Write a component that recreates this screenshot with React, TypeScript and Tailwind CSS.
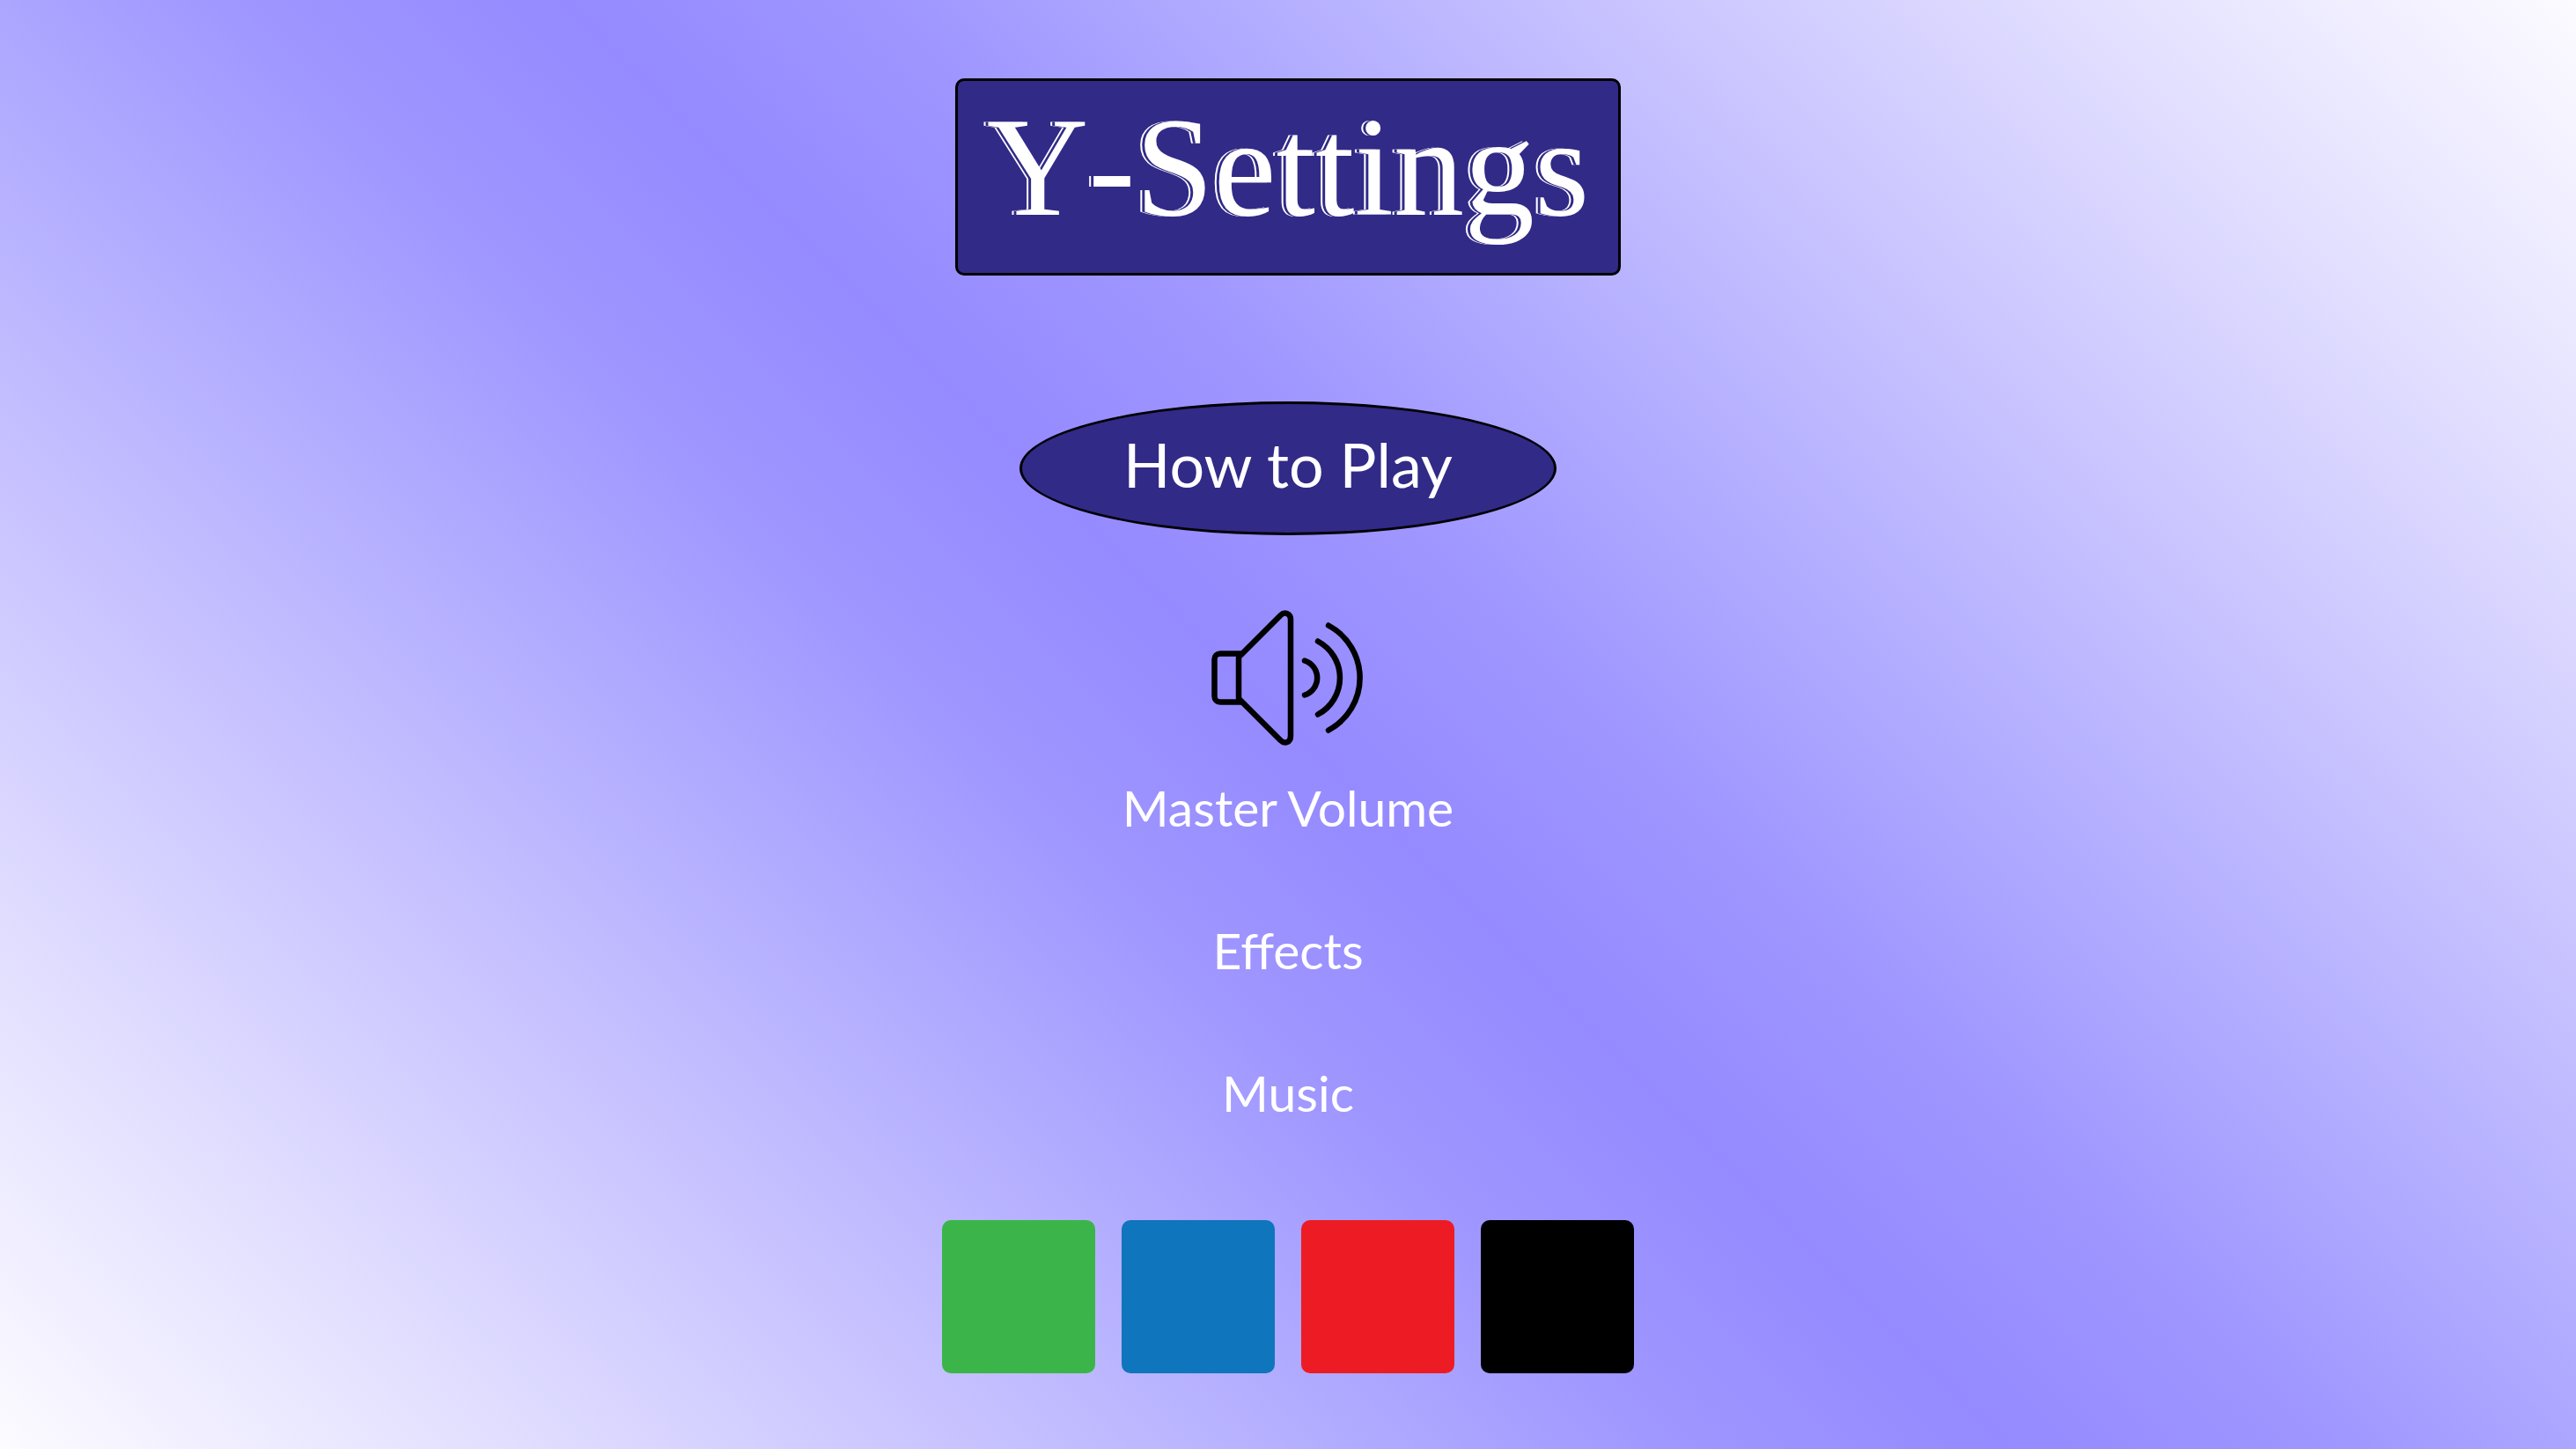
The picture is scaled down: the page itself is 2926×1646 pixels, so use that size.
const swatches = [
  { name: "Green", color: "bg-[#3bb54a]" },
  { name: "Blue", color: "bg-[#0f75bc]" },
  { name: "Red", color: "bg-[#ed1c24]" },
  { name: "Black", color: "bg-black" },
];

const labels = ["Master Volume", "Effects", "Music"];

function SpeakerIcon() {
  return (
    <svg
      viewBox="0 0 174 154"
      className="h-[154px] w-[174px]"
      fill="none"
      stroke="#000"
      strokeWidth="6.5"
      strokeLinecap="round"
      strokeLinejoin="round"
      aria-hidden="true"
    >
      <path d="M32 49.5H8a6.500 6.500 0 0 0-6.500 6.500v42a6.500 6.500 0 0 0 6.500 6.500h24" transform="translate(2 0)" />
      <path d="M31 54v46" />
      <path d="M33 51.500 78.500 6c4.500-4.500 11.500-2.500 11.500 5v132c0 7.500-7 9.500-11.500 5L33 102.500" />
      <path d="M106 57.500a20.500 20.500 0 0 1 0 39" />
      <path d="M121 35.500a47 47 0 0 1 0 83" />
      <path d="M133 17.500a67.500 67.500 0 0 1 0 119" />
    </svg>
  );
}

export default function App() {
  return (
    <main className="flex min-h-screen flex-col items-center bg-[linear-gradient(45deg,#fcfbff_0%,#e3e0ff_12%,#c6c1ff_25%,#aca6ff_36%,#9f96ff_42%,#958aff_50%,#9f96ff_58%,#aca6ff_64%,#c6c1ff_75%,#e3e0ff_88%,#fcfbff_100%)] pt-[89px] pb-20 font-['Lato',sans-serif] text-white">
      <h1 className="rounded-[10px] border-[3px] border-black bg-[#312a87] px-[33px] pb-[22px] font-['Liberation_Serif',serif] text-[160px] leading-[196px] [font-kerning:none] [text-shadow:-3px_0_#312a87,-5px_0_#ffffff]">
        Y-Settings
      </h1>

      <button
        type="button"
        className="mt-[143px] h-[152px] w-[610px] rounded-[50%] border-[3px] border-black bg-[#312a87] pb-2.5 text-[70px] leading-none"
      >
        How to Play
      </button>

      <button type="button" aria-label="Toggle sound" className="mt-[85px]">
        <SpeakerIcon />
      </button>

      <div className="mt-[34px] flex flex-col items-center gap-[90px] text-[57px] leading-[72px]">
        {labels.map((label) => (
          <p key={label}>{label}</p>
        ))}
      </div>

      <div className="mt-[109px] flex gap-[30px]">
        {swatches.map((swatch) => (
          <button
            key={swatch.name}
            type="button"
            aria-label={swatch.name}
            className={`size-[174px] rounded-[10px] ${swatch.color}`}
          />
        ))}
      </div>
    </main>
  );
}
